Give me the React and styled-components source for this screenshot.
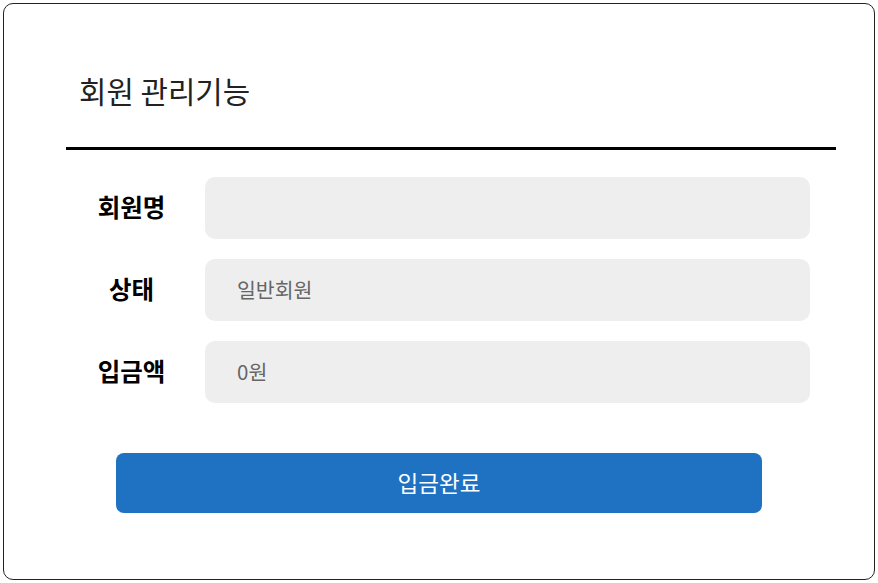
import React, { useState } from 'react'
import styled, { createGlobalStyle } from 'styled-components'

const GlobalStyle = createGlobalStyle`
  * { box-sizing: border-box; }
  body {
    margin: 0;
    padding: 3px;
    background: #fff;
    font-family: "Noto Sans CJK KR", "Noto Sans", sans-serif;
  }
`

const fields = [
  { label: '회원명', placeholder: '' },
  { label: '상태', placeholder: '일반회원' },
  { label: '입금액', placeholder: '0원' },
]

export default function App () {
  const [values, setValues] = useState({})

  return (
    <>
      <GlobalStyle />
      <Card>
        <Title>회원 관리기능</Title>
        <Form>
          {fields.map((f) => (
            <Row key={f.label}>
              <Label>{f.label}</Label>
              <Input
                value={values[f.label] || ''}
                placeholder={f.placeholder}
                onChange={(e) => setValues({ ...values, [f.label]: e.target.value })}
              />
            </Row>
          ))}
        </Form>
        <SubmitButton>입금완료</SubmitButton>
      </Card>
    </>
  )
}

const Card = styled.div`
  width: 872px;
  height: 577px;
  border: 1px solid #222;
  border-radius: 10px;
  padding: 62px 38px 0 62px;
`

const Title = styled.h1`
  margin: 0;
  padding: 0 0 0 13px;
  height: 84px;
  border-bottom: 3px solid #000;
  font-size: 29.8px;
  font-weight: 400;
  color: #222;
  line-height: 48px;
`

const Form = styled.div`
  display: flex;
  flex-direction: column;
  gap: 20px;
  padding: 27px 26px 0 0;
`

const Row = styled.div`
  display: flex;
  align-items: center;
  gap: 8px;
`

const Label = styled.div`
  width: 131px;
  padding-bottom: 4px;
  text-align: center;
  font-size: 24.5px;
  font-weight: 700;
  color: #000;
`

const Input = styled.input`
  flex: 1;
  height: 62px;
  border: none;
  border-radius: 10px;
  background: #eee;
  padding: 0 32px 3px;
  font-family: inherit;
  font-size: 20.5px;
  color: #333;
  outline: none;

  &::placeholder {
    color: #666;
  }
`

const SubmitButton = styled.button`
  display: block;
  width: 646px;
  height: 60px;
  margin: 50px 0 0 50px;
  padding-bottom: 3px;
  border: none;
  border-radius: 8px;
  background: #1f72c1;
  color: #fff;
  font-family: inherit;
  font-size: 22.5px;
  cursor: pointer;
`
